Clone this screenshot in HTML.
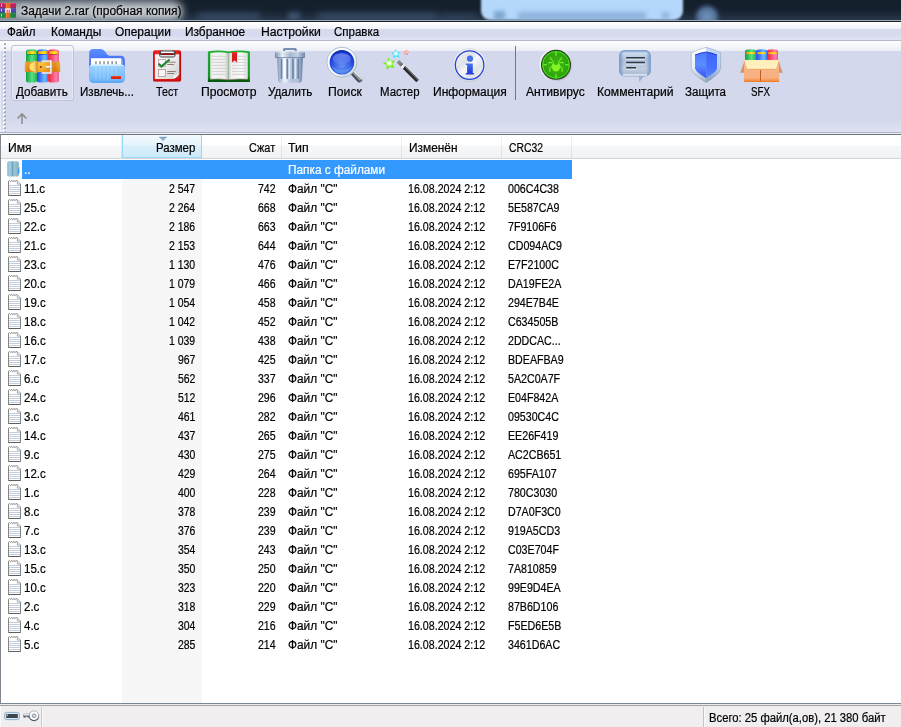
<!DOCTYPE html>
<html lang="ru">
<head>
<meta charset="utf-8">
<title>Задачи 2.rar (пробная копия)</title>
<style>
html,body{margin:0;padding:0;}
body{width:901px;height:727px;overflow:hidden;position:relative;background:#fff;
  font-family:"Liberation Sans","DejaVu Sans",sans-serif;font-size:12px;color:#000;}
.abs{position:absolute;}
.t{position:absolute;white-space:nowrap;line-height:14px;height:14px;transform-origin:0 50%;-webkit-text-stroke:.2px currentColor;}
.r{transform-origin:100% 50%;}
/* title bar */
#title{left:0;top:0;width:901px;height:22px;background:linear-gradient(#141f2c 0,#16212f 10px,#1d2a39 15px,#28384a 20px);overflow:hidden;}
#title .glow{left:-30px;top:0px;width:212px;height:22px;border-radius:11px;background:rgba(196,202,209,.86);filter:blur(5px);}
#title .blob1{left:481px;top:-10px;width:202px;height:30px;border-radius:9px;background:#b5d7fb;filter:blur(1.2px);}
#title .blob2{left:696px;top:6px;width:22px;height:22px;border-radius:11px;background:radial-gradient(#7898c0 0,#5a7aa2 45%,#46648c 100%);filter:blur(2px);}
#title .l1{left:0;top:20px;width:901px;height:1px;background:#9aa9b8;}
#title .l2{left:0;top:21px;width:901px;height:1px;background:#1b232c;}
.ttl{text-shadow:0 0 5px rgba(255,255,255,.9),0 0 9px rgba(255,255,255,.7);}
/* menu */
#menu{left:0;top:22px;width:901px;height:19px;background:linear-gradient(#ffffff 0,#ffffff 1px,#eef0f8 7px,#d9dcef 7px,#d5d9ed 12px,#e0e3f3 18px,#b4b8cc 18px,#b4b8cc 19px);}
/* toolbar */
#tb{left:0;top:41px;width:901px;height:91px;background:linear-gradient(#ffffff 0,#f6f7fb 5px,#eceef6 10px,#d4d8ec 10px,#d4d8ec 78px,#dde1f1 91px);}
#tbl1{left:0;top:132px;width:901px;height:1px;background:#b0b4c8;}
#tbl2{left:0;top:133px;width:901px;height:1px;background:#eeeeee;}
#tbl3{left:0;top:134px;width:901px;height:1px;background:#6c7480;}
.btnhot{left:11px;top:45px;width:61px;height:54px;border:1px solid #bfc3d5;border-radius:3px;background:linear-gradient(rgba(255,255,255,.35) 0,rgba(255,255,255,.22) 5px,rgba(255,255,255,.16) 6px,rgba(255,255,255,.12) 100%);box-shadow:inset 0 0 0 1px rgba(255,255,255,.35);}
.lbl{top:84px;}
/* list */
#list{left:0;top:135px;width:901px;height:568px;background:#fff;}
#lb{left:0;top:134px;width:1px;height:569px;background:#828790;}
#hdr{left:1px;top:135px;width:900px;height:23px;background:linear-gradient(#fff 0,#fff 10px,#f6f7f9 11px,#f1f2f4 23px);}
#hdrb{left:1px;top:158px;width:900px;height:1px;background:#d5d5d5;}
.hs{top:135px;width:1px;height:23px;background:linear-gradient(#f2f2f2,#dedfe1);}
#hsel{left:122px;top:135px;width:78px;height:22px;border:1px solid #96d9f9;border-top:none;background:linear-gradient(#f2f9fd 0,#e5f4fc 10px,#d9effb 11px,#cfeafa 22px);}
#sortcol{left:122px;top:159px;width:80px;height:544px;background:#f7f7f7;}
#selrow{left:22px;top:160px;width:550px;height:19px;background:#3399ff;}
.row{position:absolute;left:0;width:901px;height:19px;}
/* status */
#st{left:0;top:706px;width:901px;height:21px;background:#f0eeee;}
#stl1{left:0;top:703px;width:901px;height:1px;background:#7c8796;}
#stl2{left:0;top:704px;width:901px;height:2px;background:linear-gradient(#ececec 50%,#a4a4a4 50%);}
</style>
</head>
<body>
<!-- TITLE -->
<div id="title" class="abs">
  <div class="abs glow"></div>
  <div class="abs blob1"></div>
  <div class="abs blob2"></div>
  <div class="abs" style="left:494px;top:11px;width:11px;height:9px;background:#6f9ac4;filter:blur(2px);opacity:.8"></div>
  <div class="abs" style="left:518px;top:12px;width:128px;height:8px;background:#7fa6d2;filter:blur(2.5px);opacity:.75"></div>
  <div class="abs" style="left:662px;top:12px;width:7px;height:7px;background:#7fa6d2;filter:blur(2px);opacity:.7"></div>
  <div class="abs" style="left:318px;top:13px;width:120px;height:7px;background:#40587a;filter:blur(3px);opacity:.7"></div>
  <div class="abs" style="left:198px;top:13px;width:62px;height:7px;background:#40587a;filter:blur(3px);opacity:.7"></div>
  <div class="abs" style="left:288px;top:12px;width:12px;height:8px;background:#4a6488;filter:blur(2.5px);opacity:.7"></div>
  <div class="abs" style="left:440px;top:14px;width:36px;height:6px;background:#3a5070;filter:blur(3px);opacity:.6"></div>
  <div class="abs l1"></div><div class="abs l2"></div>
<div class="t ttl" style="left:21.10px;top:4.4px;transform:scaleX(0.9954)">Задачи 2.rar (пробная копия)</div>
</div>
<!-- MENU -->
<div id="menu" class="abs"></div>
<div class="t" style="left:7.10px;top:25.0px;transform:scaleX(0.9627)">Файл</div>
<div class="t" style="left:50.60px;top:25.0px;transform:scaleX(0.9897)">Команды</div>
<div class="t" style="left:115.40px;top:25.0px;transform:scaleX(0.9941)">Операции</div>
<div class="t" style="left:185.40px;top:25.0px;transform:scaleX(0.9895)">Избранное</div>
<div class="t" style="left:260.60px;top:25.0px;transform:scaleX(1.0166)">Настройки</div>
<div class="t" style="left:334.30px;top:25.0px;transform:scaleX(0.9599)">Справка</div>
<!-- TOOLBAR -->
<div id="tb" class="abs"></div>
<div id="tbl1" class="abs"></div><div id="tbl2" class="abs"></div><div id="tbl3" class="abs"></div>
<div class="abs btnhot"></div>
<svg class="abs" style="left:0;top:41px" width="901" height="92" viewBox="0 41 901 92">
<defs>
<linearGradient id="gGreen" x1="0" x2="1" y1="0" y2="0"><stop offset="0" stop-color="#12a040"/><stop offset=".55" stop-color="#58e084"/><stop offset="1" stop-color="#1fb54c"/></linearGradient>
<linearGradient id="gBlue" x1="0" x2="1" y1="0" y2="0"><stop offset="0" stop-color="#2844ee"/><stop offset=".7" stop-color="#6cbcff"/><stop offset="1" stop-color="#3c7cf4"/></linearGradient>
<linearGradient id="gRed" x1="0" x2="1" y1="0" y2="0"><stop offset="0" stop-color="#f02030"/><stop offset=".75" stop-color="#ff80b0"/><stop offset="1" stop-color="#f05080"/></linearGradient>
<linearGradient id="gYel" x1="0" x2="1" y1="0" y2="0"><stop offset="0" stop-color="#f09010"/><stop offset=".6" stop-color="#ffe820"/><stop offset="1" stop-color="#f8b010"/></linearGradient>
<linearGradient id="gBelt" x1="0" x2="0" y1="0" y2="1"><stop offset="0" stop-color="#fcc450"/><stop offset=".5" stop-color="#f4a024"/><stop offset="1" stop-color="#e07c10"/></linearGradient>
<linearGradient id="gBeltH" x1="0" x2="1" y1="0" y2="0"><stop offset="0" stop-color="#f0a030"/><stop offset=".1" stop-color="#d87818"/><stop offset=".3" stop-color="#f8c040"/><stop offset=".5" stop-color="#fcc838"/><stop offset=".62" stop-color="#f4a428"/><stop offset=".85" stop-color="#cc6c10"/><stop offset="1" stop-color="#f0a030"/></linearGradient>
<linearGradient id="gShade" x1="0" x2="0" y1="0" y2="1"><stop offset="0" stop-color="#fff" stop-opacity=".25"/><stop offset=".15" stop-color="#fff" stop-opacity="0"/><stop offset=".8" stop-color="#000" stop-opacity="0"/><stop offset="1" stop-color="#fff" stop-opacity=".2"/></linearGradient>
</defs>
<!-- ADD: books with belt -->
<g>
<path d="M26 51.2Q26 49.2 31.5 49.2Q37 49.2 37 51.2V81Q37 82.6 31.5 82.6Q26 82.6 26 81Z" fill="url(#gGreen)"/>
<path d="M37 51.2Q37 49.2 42.5 49.2Q48.1 49.2 48.1 51.2V81Q48.1 82.6 42.5 82.6Q37 82.6 37 81Z" fill="url(#gBlue)"/>
<path d="M48.1 51.2Q48.1 49.2 53.5 49.2Q58.9 49.2 58.9 51.2V81Q58.9 82.6 53.5 82.6Q48.1 82.6 48.1 81Z" fill="url(#gRed)"/>
<rect x="27" y="51.2" width="9" height="2.8" fill="url(#gYel)"/>
<rect x="38.1" y="51.2" width="9" height="2.8" fill="url(#gYel)"/>
<rect x="49" y="51.2" width="9" height="2.8" fill="url(#gYel)"/>
<rect x="27.5" y="54" width="8" height="1" fill="#0a7028" opacity=".5"/><rect x="38.5" y="54" width="8" height="1" fill="#1028a0" opacity=".5"/><rect x="49.5" y="54" width="8" height="1" fill="#a01020" opacity=".5"/>
<rect x="24.9" y="61.8" width="35.2" height="10.2" fill="url(#gBelt)"/>
<rect x="24.9" y="61.8" width="35.2" height="10.2" fill="url(#gBeltH)" opacity=".55"/>
<path d="M34 62.6A4.6 4.3 0 0 0 34 71.2Z" fill="#f8e468"/>
<rect x="33.9" y="61.2" width="3.7" height="11.5" fill="#f2b050"/><rect x="33.9" y="61.2" width="1.2" height="11.5" fill="#f8cc70"/><rect x="36.6" y="61.2" width="1" height="11.5" fill="#d08020"/>
<circle cx="40.8" cy="67" r="1" fill="#70380a"/>
<path d="M41.8 60.9H51V73.2H41.8" fill="none" stroke="#f2f4f8" stroke-width="1.8"/>
<path d="M41.8 60.2H51.8V73.9H41.8" fill="none" stroke="#8890a0" stroke-width=".5"/>
<rect x="45.7" y="66" width="5.6" height="1.9" fill="#fff"/><rect x="45.7" y="67.6" width="5.6" height=".6" fill="#9098a8"/>
</g>
<!-- EXTRACT: folder -->
<defs>
<linearGradient id="gFBack" x1="0" x2="0" y1="0" y2="1"><stop offset="0" stop-color="#5c90ff"/><stop offset=".4" stop-color="#4470f6"/><stop offset="1" stop-color="#3058e8"/></linearGradient>
<linearGradient id="gFFront" x1="0" x2="0" y1="0" y2="1"><stop offset="0" stop-color="#b8e4ff"/><stop offset=".12" stop-color="#98d0ff"/><stop offset=".75" stop-color="#78bcfa"/><stop offset="1" stop-color="#58a4f6"/></linearGradient>
</defs>
<g>
<path d="M89.2 53Q89.2 49 93.5 49H100.5Q102.8 49 104.3 50.8L107.2 54.6Q108 55.7 109.6 55.7H120.5Q124.8 55.7 124.8 60V78H89.2Z" fill="url(#gFBack)"/>
<rect x="90.9" y="58.2" width="30.4" height="8" fill="#fff"/>
<g fill="#8a9098"><rect x="95.2" y="61.2" width="1.5" height="3.2"/><rect x="99.2" y="61.2" width="1.5" height="3.2"/><rect x="103.3" y="61.2" width="1.5" height="3.2"/><rect x="107.3" y="61.2" width="1.5" height="3.2"/><rect x="111.4" y="61.2" width="1.5" height="3.2"/><rect x="115.4" y="61.2" width="1.5" height="3.2"/></g>
<rect x="121.6" y="59.5" width="1.2" height="5" fill="#a8c0f8" opacity=".8"/>
<path d="M89.1 68Q89.1 64.4 92.6 64.4H121.4Q124.9 64.4 124.9 68V78.6Q124.9 82.9 120.6 82.9H93.4Q89.1 82.9 89.1 78.6Z" fill="url(#gFFront)"/>
<path d="M90.2 66.3Q91 65.2 92.8 65.2H121.2Q123 65.2 123.8 66.3" fill="none" stroke="#e8f8ff" stroke-width=".9"/>
<g stroke="#fff" stroke-opacity=".18" stroke-width="1.4"><path d="M96 66V81M100 66V81M104 66V81M108 66V81M112 66V81M116 66V81"/></g>
<rect x="111" y="76.1" width="10" height="2.9" fill="#e62010"/><rect x="111" y="76.1" width="10" height=".8" fill="#f05030"/>
</g>
</svg>
<svg class="abs" style="left:0;top:41px" width="901" height="92" viewBox="0 41 901 92">
<defs>
<linearGradient id="gClipR" x1="0" x2="1" y1="0" y2="0"><stop offset="0" stop-color="#d01010"/><stop offset=".1" stop-color="#f02424"/><stop offset=".9" stop-color="#e81c1c"/><stop offset="1" stop-color="#b80808"/></linearGradient>
<linearGradient id="gPaper" x1="0" x2="1" y1="0" y2="1"><stop offset="0" stop-color="#fafafa"/><stop offset=".5" stop-color="#ececec"/><stop offset="1" stop-color="#cccccc"/></linearGradient>
<linearGradient id="gClipM" x1="0" x2="0" y1="0" y2="1"><stop offset="0" stop-color="#e8e8e8"/><stop offset=".3" stop-color="#505458"/><stop offset=".45" stop-color="#ffffff"/><stop offset=".7" stop-color="#d0d0d0"/><stop offset="1" stop-color="#585c60"/></linearGradient>
<linearGradient id="gCover" x1="0" x2="0" y1="0" y2="1"><stop offset="0" stop-color="#20b030"/><stop offset=".8" stop-color="#149820"/><stop offset="1" stop-color="#085c10"/></linearGradient>
<linearGradient id="gPgL" x1="0" x2="1" y1="0" y2="0"><stop offset="0" stop-color="#dcdcdc"/><stop offset=".15" stop-color="#f4f4f4"/><stop offset=".8" stop-color="#eeeeee"/><stop offset="1" stop-color="#bcbcbc"/></linearGradient>
<linearGradient id="gPgR" x1="0" x2="1" y1="0" y2="0"><stop offset="0" stop-color="#c8c8c8"/><stop offset=".15" stop-color="#f0f0f0"/><stop offset=".7" stop-color="#fafafa"/><stop offset="1" stop-color="#dadada"/></linearGradient>
<linearGradient id="gLid" x1="0" x2="1" y1="0" y2="0"><stop offset="0" stop-color="#7890b0"/><stop offset=".25" stop-color="#e8f0f8"/><stop offset=".5" stop-color="#a4b8d0"/><stop offset=".75" stop-color="#c0d0e4"/><stop offset="1" stop-color="#6c84a8"/></linearGradient>
<linearGradient id="gCan" x1="0" x2="1" y1="0" y2="0"><stop offset="0" stop-color="#7890b0"/><stop offset=".12" stop-color="#b4c4d8"/><stop offset=".3" stop-color="#eef4fa"/><stop offset=".5" stop-color="#b8c8dc"/><stop offset=".8" stop-color="#b0c0d6"/><stop offset="1" stop-color="#6880a4"/></linearGradient>
<radialGradient id="gLens" cx=".5" cy=".66" r=".66"><stop offset="0" stop-color="#6490f0"/><stop offset=".5" stop-color="#3860e8"/><stop offset=".8" stop-color="#1c3cd4"/><stop offset="1" stop-color="#0a24a8"/></radialGradient>
<linearGradient id="gLensHi" x1="0" x2="0" y1="0" y2="1"><stop offset="0" stop-color="#98a8fc"/><stop offset="1" stop-color="#7890f4" stop-opacity=".5"/></linearGradient>
<linearGradient id="gRing" x1="0" x2="1" y1="0" y2="1"><stop offset="0" stop-color="#ffffff"/><stop offset=".6" stop-color="#f4f8fa"/><stop offset="1" stop-color="#b8ccd4"/></linearGradient>
</defs>
<!-- TEST: clipboard -->
<g>
<rect x="153" y="50.3" width="28.1" height="31.2" rx="2.2" fill="url(#gClipR)"/>
<rect x="153" y="79.5" width="28.1" height="2" rx="1" fill="#b00808" opacity=".6"/>
<path d="M154.9 54.2H179.2V74.5Q178.5 78.6 172.5 79.1H154.9Z" fill="url(#gPaper)"/>
<path d="M179.2 74.2Q176 77 172.2 79.1Q178.6 79 179.2 74.2Z" fill="#a81414"/>
<path d="M179.2 73.5Q177 75.2 173.5 76Q173.8 77.8 172.5 79.1Q178 77.5 179.2 73.5Z" fill="#fafafa"/>
<rect x="163" y="49.2" width="9" height="2.4" rx=".8" fill="#dedede"/>
<rect x="159.2" y="50.5" width="16.4" height="6.9" rx="2.6" fill="#44484c"/>
<rect x="161" y="51.5" width="12.8" height="1.8" fill="#fafafa"/>
<rect x="161.6" y="53.3" width="11.6" height="1.7" fill="#8c1010"/>
<rect x="160.2" y="55" width="14.4" height="1.6" rx=".6" fill="#e6e6e6"/>
<rect x="158.4" y="59.6" width="7.2" height="7" fill="#f8f4f4" stroke="#b09c9c" stroke-width=".7"/>
<rect x="158.4" y="69.5" width="7.2" height="7" fill="#f8f4f4" stroke="#a08c8c" stroke-width=".7"/>
<path d="M158.6 63.6L161.3 66.5L169.6 59.5" fill="none" stroke="#168428" stroke-width="2" stroke-linejoin="miter"/>
<g stroke="#8a6c6c" stroke-width=".9"><path d="M167.2 62.2H175.6M167.2 64.5H174M167.2 71.5H175.6M167.2 73.5H174"/></g>
</g>
<!-- VIEW: open book -->
<g>
<path d="M207.9 51.5Q218 49.6 229 51.6Q240 49.6 249.9 51.5V81.9H207.9Z" fill="url(#gCover)"/>
<path d="M207.9 79.8H249.9V81.9H207.9Z" fill="#06500c" opacity=".55"/>
<path d="M210.2 53Q220 51.6 228.6 53.2V79.8Q220 78.4 210.2 79.2Z" fill="url(#gPgL)"/>
<path d="M228.6 53.2Q238 51.6 247.8 53V79.2Q238 78.4 228.6 79.8Z" fill="url(#gPgR)"/>
<path d="M210.2 79.2Q220 78.4 228.6 79.8Q238 78.4 247.8 79.2" fill="none" stroke="#a07878" stroke-width=".6"/>
<g stroke="#cecece" stroke-width=".9"><path d="M212 56.3H226M212 59.4H226M212 62.4H226M212 65.4H226M212 68.4H226M212 71.4H226M212 74.4H226"/><path d="M238 56.3H246M238 59.4H246M232 62.4H246M232 65.4H246M232 68.4H246M232 71.4H246M232 74.4H246"/></g>
<path d="M231.9 52.2H237.1V62.4L234.5 60.4L231.9 62.4Z" fill="#d62020"/><path d="M231.9 52.2H237.1V53.6H231.9Z" fill="#f03030"/>
</g>
<!-- DELETE: trash can -->
<g>
<path d="M283 51.4V49.4Q283 47.9 284.5 47.9H295.3Q296.8 47.9 296.8 49.4V51.4H294.6V50H285.2V51.4Z" fill="#7890b0"/>
<path d="M277.1 57H303L301.9 80.4Q301.8 82.7 299.4 82.7H280.7Q278.3 82.7 278.2 80.4Z" fill="url(#gCan)"/>
<g fill="#6c84a8"><rect x="280.6" y="58.6" width="1.7" height="20.4" rx=".8"/><rect x="286.4" y="58.6" width="1.7" height="20.4" rx=".8"/><rect x="292.1" y="58.6" width="1.7" height="20.4" rx=".8"/><rect x="297.4" y="58.6" width="1.7" height="20.4" rx=".8"/></g>
<g fill="#fff" opacity=".85"><rect x="283.4" y="58.6" width="2.3" height="20.4"/><rect x="289" y="58.6" width="1.2" height="20.4" opacity=".6"/><rect x="294.6" y="58.6" width="1.5" height="20.4" opacity=".7"/></g>
<path d="M274.9 54Q274.9 51.2 278 51.2H302Q305 51.2 305 54V56.4Q305 57.9 303.5 57.9H276.4Q274.9 57.9 274.9 56.4Z" fill="url(#gLid)"/>
<path d="M276 52.6Q276.5 51.8 278 51.8H302Q303.5 51.8 304 52.6" fill="none" stroke="#eef4fa" stroke-width=".8"/>
<rect x="275.4" y="57.1" width="29.2" height=".9" fill="#5c7498" opacity=".7"/>
</g>
<!-- FIND: magnifier -->
<g>
<path d="M350.6 74.2L354.6 70.4L362.4 78.2Q363.2 79.8 361.4 81.6Q359.6 83.2 358 82.2Z" fill="#4a4e58"/>
<path d="M354.6 70.4L362.4 78.2Q362.9 79.2 362.3 80.2L353.2 71.7Z" fill="#f0f2f4"/>
<path d="M353.4 73L360.6 80.4" stroke="#9aa0aa" stroke-width="1.6"/>
<circle cx="341.9" cy="62.2" r="15.3" fill="url(#gRing)"/>
<circle cx="341.9" cy="62.2" r="15" fill="none" stroke="#98b0ba" stroke-width=".8"/>
<circle cx="341.9" cy="62.2" r="12.3" fill="url(#gLens)"/>
<ellipse cx="341.7" cy="58.6" rx="9" ry="5.4" fill="url(#gLensHi)" opacity=".6"/>
<path d="M331.5 66Q342 74 352.3 66Q349 73.6 341.9 73.8Q334.8 73.6 331.5 66Z" fill="#68a8f4" opacity=".55"/>
</g>
</svg>
<svg class="abs" style="left:0;top:41px" width="901" height="92" viewBox="0 41 901 92">
<defs>
<radialGradient id="gStarG"><stop offset="0" stop-color="#ffffff"/><stop offset=".3" stop-color="#e8ffd8"/><stop offset=".6" stop-color="#78f418"/><stop offset="1" stop-color="#58ec00"/></radialGradient>
<radialGradient id="gStarC"><stop offset="0" stop-color="#ffffff"/><stop offset=".3" stop-color="#e0fcff"/><stop offset=".65" stop-color="#28ecff"/><stop offset="1" stop-color="#00e0ff"/></radialGradient>
<radialGradient id="gStarP"><stop offset="0" stop-color="#ffd8d8"/><stop offset=".5" stop-color="#ff9c9c"/><stop offset="1" stop-color="#ff7878"/></radialGradient>
<linearGradient id="gWand" gradientUnits="userSpaceOnUse" x1="397.9" y1="61.3" x2="417.6" y2="81"><stop offset="0" stop-color="#909090"/><stop offset=".2" stop-color="#707070"/><stop offset=".22" stop-color="#f8f8f8"/><stop offset=".3" stop-color="#f0f0f0"/><stop offset=".32" stop-color="#282828"/><stop offset="1" stop-color="#303030"/></linearGradient>
<radialGradient id="gInfoRim" cx=".5" cy=".4" r=".6"><stop offset="0" stop-color="#ffffff"/><stop offset=".8" stop-color="#eef0f4"/><stop offset="1" stop-color="#c8d0d8"/></radialGradient>
<linearGradient id="gInfoIn" x1="0" x2="1" y1="0" y2="1"><stop offset="0" stop-color="#f4f5f8"/><stop offset=".35" stop-color="#dfe2e8"/><stop offset=".5" stop-color="#f6f7fa"/><stop offset=".7" stop-color="#e0e3ea"/><stop offset="1" stop-color="#f0f2f6"/></linearGradient>
<linearGradient id="gInfoI" x1="0" x2="0" y1="0" y2="1"><stop offset="0" stop-color="#4878ec"/><stop offset=".4" stop-color="#3458e4"/><stop offset="1" stop-color="#2438dc"/></linearGradient>
<linearGradient id="gAvRim" x1="0" x2="1" y1="0" y2="1"><stop offset="0" stop-color="#ffffff"/><stop offset=".5" stop-color="#e4e6ea"/><stop offset="1" stop-color="#a8acb4"/></linearGradient>
<radialGradient id="gAv" cx=".5" cy=".5" r=".5"><stop offset="0" stop-color="#48c018"/><stop offset=".7" stop-color="#38ac10"/><stop offset="1" stop-color="#2c9808"/></radialGradient>
</defs>
<!-- WIZARD -->
<g>
<path id="star5" d="M0 -1L0.2939 -0.4045L0.9511 -0.309L0.4755 0.1545L0.5878 0.809L0 0.5L-0.5878 0.809L-0.4755 0.1545L-0.9511 -0.309L-0.2939 -0.4045Z" transform="translate(389.4 63.8) rotate(-12) scale(6.4)" fill="url(#gStarG)"/>
<path d="M0 -1L0.2939 -0.4045L0.9511 -0.309L0.4755 0.1545L0.5878 0.809L0 0.5L-0.5878 0.809L-0.4755 0.1545L-0.9511 -0.309L-0.2939 -0.4045Z" transform="translate(396 54) rotate(-5) scale(4.7)" fill="url(#gStarC)"/>
<path d="M0 -1L0.2939 -0.4045L0.9511 -0.309L0.4755 0.1545L0.5878 0.809L0 0.5L-0.5878 0.809L-0.4755 0.1545L-0.9511 -0.309L-0.2939 -0.4045Z" transform="translate(406.4 52.6) rotate(5) scale(3.2)" fill="url(#gStarP)"/>
<path d="M397.9 61.3L417.6 81" stroke="url(#gWand)" stroke-width="3.6"/>
<path d="M403.6 65.6L418 80" stroke="#8c8c8c" stroke-width=".9" opacity=".8"/>
</g>
<!-- INFO -->
<g>
<circle cx="469.6" cy="65.1" r="16.7" fill="url(#gInfoRim)"/>
<circle cx="469.6" cy="65.1" r="16.5" fill="none" stroke="#c0c8d2" stroke-width=".5"/>
<circle cx="469.6" cy="65.1" r="14.1" fill="url(#gInfoIn)"/>
<circle cx="469.6" cy="65.1" r="14.3" fill="none" stroke="#2844d4" stroke-width="1.3"/>
<circle cx="470" cy="58.7" r="3.1" fill="#4474ea"/>
<path d="M465.8 63.4H472.8V72.9H473.9V74.6H465.8V72.9H467.1V65.1H465.8Z" fill="url(#gInfoI)"/>
</g>
<!-- separator -->
<rect x="515" y="46" width="1" height="54" fill="#74767e"/>
<!-- ANTIVIRUS -->
<g>
<circle cx="556" cy="64.8" r="16.5" fill="url(#gAvRim)"/>
<circle cx="556" cy="64.8" r="15" fill="#2a3428"/>
<circle cx="556" cy="64.8" r="14.1" fill="url(#gAv)"/>
<g stroke="#2c9c0c" stroke-width=".8" opacity=".7"><path d="M543 58H569M542.3 60H569.7M542 62H570M542 64H570M542 66H570M542 68H570M542.3 70H569.7M543 72H569M544.5 74H567.5M546 56H566M546.5 76H565.5"/></g>
<circle cx="556" cy="64.8" r="13.2" fill="none" stroke="#48e420" stroke-width="1"/>
<g stroke="#58f028" stroke-width="1.6"><path d="M556 52V55.5M556 74.2V77.6M543.2 64.8H546.7M565.3 64.8H568.8"/></g>
<g stroke="#70f020" stroke-width="1.1" fill="none"><path d="M553.5 62L550 57.4M558.5 62L562 57.4M552.5 62.6H548.2M559.5 62.6H563.8M552.4 66L549.8 68.4V72M559.6 66L562.2 68.4V72"/></g>
<ellipse cx="556" cy="66.6" rx="4.1" ry="5" fill="#84f424"/>
<circle cx="555.9" cy="62.9" r="2.1" fill="#34b410"/>
</g>
</svg>
<svg class="abs" style="left:0;top:41px" width="901" height="92" viewBox="0 41 901 92">
<defs>
<linearGradient id="gBub" x1="0" x2="0" y1="0" y2="1"><stop offset="0" stop-color="#88a4d4"/><stop offset=".12" stop-color="#ccdaee"/><stop offset=".35" stop-color="#b0c2dc"/><stop offset=".7" stop-color="#c0cce0"/><stop offset="1" stop-color="#a8b8d0"/></linearGradient>
<linearGradient id="gBubE" x1="0" x2="1" y1="0" y2="0"><stop offset="0" stop-color="#6c8cc0" stop-opacity=".8"/><stop offset=".15" stop-color="#6c8cc0" stop-opacity="0"/><stop offset=".85" stop-color="#6c8cc0" stop-opacity="0"/><stop offset="1" stop-color="#6c8cc0" stop-opacity=".8"/></linearGradient>
<linearGradient id="gShL" x1="0" x2="0" y1="0" y2="1"><stop offset="0" stop-color="#4a7cff"/><stop offset=".5" stop-color="#5c8cff"/><stop offset="1" stop-color="#3850f8"/></linearGradient>
<linearGradient id="gShR" x1="0" x2="0" y1="0" y2="1"><stop offset="0" stop-color="#3c64fc"/><stop offset=".6" stop-color="#4870ff"/><stop offset="1" stop-color="#5888fc"/></linearGradient>
<linearGradient id="gShRimL" x1="0" x2="0" y1="0" y2="1"><stop offset="0" stop-color="#ffffff"/><stop offset=".6" stop-color="#e8eef6"/><stop offset="1" stop-color="#98acc4"/></linearGradient>
<linearGradient id="gShRimR" x1="0" x2="0" y1="0" y2="1"><stop offset="0" stop-color="#c4dcf8"/><stop offset=".6" stop-color="#b8cce8"/><stop offset="1" stop-color="#8098b8"/></linearGradient>
<linearGradient id="gBoxF" x1="0" x2="0" y1="0" y2="1"><stop offset="0" stop-color="#c88450"/><stop offset=".25" stop-color="#f4b488"/><stop offset=".8" stop-color="#f8b080"/><stop offset="1" stop-color="#f48838"/></linearGradient>
<linearGradient id="gBoxI" x1="0" x2="0" y1="0" y2="1"><stop offset="0" stop-color="#ffeeb4"/><stop offset="1" stop-color="#fff2c4"/></linearGradient>
</defs>
<!-- COMMENT -->
<g>
<path d="M638.9 75.5H644.6L639.2 82.2Z" fill="#9cb4d0"/>
<rect x="619.2" y="50.1" width="31.5" height="26.3" rx="5.4" fill="url(#gBub)"/>
<rect x="619.2" y="50.1" width="31.5" height="26.3" rx="5.4" fill="url(#gBubE)"/>
<rect x="620" y="50.8" width="29.9" height="24.9" rx="4.8" fill="none" stroke="#7c9ccc" stroke-width=".9"/>
<path d="M623 75H647" stroke="#f0f6fc" stroke-width="1.3"/>
<g stroke="#e0e8f2" stroke-width="1.3"><path d="M626.2 59H644.9M626.2 63.9H644.9M626.2 69H636"/></g>
<g stroke="#2c3640" stroke-width="1.5"><path d="M626.2 57.7H644.9M626.2 62.6H644.9M626.2 67.7H636"/></g>
</g>
<!-- PROTECT: shield -->
<g>
<path d="M706.1 47.2Q698 49 691.1 52.7V68.8Q692.5 74.5 706.1 82.7Z" fill="url(#gShRimL)"/>
<path d="M706.1 47.2Q714.2 49 720.8 52.7V68.8Q719.6 74.5 706.1 82.7Z" fill="url(#gShRimR)"/>
<path d="M706.1 47.4Q698 49.2 691.3 52.9V68.7Q692.7 74.4 706.1 82.5Q719.4 74.4 720.6 68.7V52.9Q714.2 49.2 706.1 47.4Z" fill="none" stroke="#8c9cb4" stroke-width=".5"/>
<path d="M706.1 52.1Q700 52.8 695 55V68.6Q696.4 72.6 706.1 78.2Z" fill="url(#gShL)"/>
<path d="M706.1 52.1Q712 52.8 717 55V68.6Q715.8 72.6 706.1 78.2Z" fill="url(#gShR)"/>
<path d="M695 55Q700 52.8 706.1 52.1Q712 52.8 717 55" fill="none" stroke="#1c34c8" stroke-width=".9"/>
</g>
<!-- SFX -->
<g>
<path d="M744.2 62L740.2 72.7H744.2Z" fill="#d49468"/><path d="M779 62L782.7 72.7H779Z" fill="#d49468"/>
<path d="M745 51Q745 49.2 750.5 49.2Q756.1 49.2 756.1 51V61H745Z" fill="url(#gGreen2)"/>
<path d="M756.1 51Q756.1 49.2 761.5 49.2Q767 49.2 767 51V61H756.1Z" fill="url(#gBlue2)"/>
<path d="M767 51Q767 49.2 772.5 49.2Q778 49.2 778 51V61H767Z" fill="url(#gRed2)"/>
<rect x="746.2" y="52.1" width="8.8" height="2" fill="url(#gYel2)"/><rect x="757.2" y="52.1" width="8.8" height="2" fill="url(#gYel2)"/><rect x="768.2" y="52.1" width="8.8" height="2" fill="url(#gYel2)"/>
<rect x="744" y="60" width="35.1" height="21.9" fill="url(#gBoxF)"/>
<path d="M744 60H779.1L775.9 69.3H747.2Z" fill="url(#gBoxI)"/>
<path d="M747.2 69.3H775.9" stroke="#f0a050" stroke-width=".8"/>
<rect x="760" y="70" width="1" height="11.9" fill="#c0601c"/>
<rect x="744" y="80.9" width="35.1" height="1" fill="#f08028"/>
</g>
<defs>
<linearGradient id="gGreen2" x1="0" x2="1" y1="0" y2="0"><stop offset="0" stop-color="#12a040"/><stop offset=".6" stop-color="#58e084"/><stop offset="1" stop-color="#1fb54c"/></linearGradient>
<linearGradient id="gBlue2" x1="0" x2="1" y1="0" y2="0"><stop offset="0" stop-color="#2844ee"/><stop offset=".7" stop-color="#6cbcff"/><stop offset="1" stop-color="#3c7cf4"/></linearGradient>
<linearGradient id="gRed2" x1="0" x2="1" y1="0" y2="0"><stop offset="0" stop-color="#f02030"/><stop offset=".75" stop-color="#ff80b0"/><stop offset="1" stop-color="#f05080"/></linearGradient>
<linearGradient id="gYel2" x1="0" x2="1" y1="0" y2="0"><stop offset="0" stop-color="#f09010"/><stop offset=".6" stop-color="#ffe820"/><stop offset="1" stop-color="#f8b010"/></linearGradient>
</defs>
</svg>

<div class="t" style="left:16.00px;top:84.6px;transform:scaleX(0.9776)">Добавить</div>
<div class="t" style="left:79.60px;top:84.6px;transform:scaleX(0.9645)">Извлечь...</div>
<div class="t" style="left:156.40px;top:84.6px;transform:scaleX(0.8922)">Тест</div>
<div class="t" style="left:200.70px;top:84.6px;transform:scaleX(1.0140)">Просмотр</div>
<div class="t" style="left:268.00px;top:84.6px;transform:scaleX(0.9657)">Удалить</div>
<div class="t" style="left:327.60px;top:84.6px;transform:scaleX(1.0176)">Поиск</div>
<div class="t" style="left:379.60px;top:84.6px;transform:scaleX(0.9512)">Мастер</div>
<div class="t" style="left:433.40px;top:84.6px;transform:scaleX(1.0045)">Информация</div>
<div class="t" style="left:526.40px;top:84.6px;transform:scaleX(1.0066)">Антивирус</div>
<div class="t" style="left:596.50px;top:84.6px;transform:scaleX(1.0123)">Комментарий</div>
<div class="t" style="left:685.10px;top:84.6px;transform:scaleX(0.9636)">Защита</div>
<div class="t" style="left:751.00px;top:84.6px;transform:scaleX(0.8143)">SFX</div>
<!-- LIST -->
<div id="list" class="abs"></div>
<div id="lb" class="abs"></div>
<div id="hdr" class="abs"></div><div id="hdrb" class="abs"></div>
<div id="sortcol" class="abs"></div>
<div id="hsel" class="abs"></div>
<div id="selrow" class="abs"></div>
<div class="abs hs" style="left:121px"></div><div class="abs hs" style="left:281px"></div><div class="abs hs" style="left:401px"></div><div class="abs hs" style="left:501px"></div><div class="abs hs" style="left:571px"></div>
<div class="t" style="left:8.40px;top:141.0px;transform:scaleX(1.0098)">Имя</div>
<div class="t" style="left:156.40px;top:141.0px;transform:scaleX(0.9526)">Размер</div>
<div class="t" style="left:248.50px;top:141.0px;transform:scaleX(0.9058)">Сжат</div>
<div class="t" style="left:288.40px;top:141.0px;transform:scaleX(1.0305)">Тип</div>
<div class="t" style="left:408.60px;top:141.0px;transform:scaleX(0.9907)">Изменён</div>
<div class="t" style="left:508.60px;top:141.0px;transform:scaleX(0.8621)">CRC32</div>
<div class="t" style="left:23.83px;top:163.0px;transform:scaleX(0.9749);color:#fff">..</div>
<div class="t" style="left:288.40px;top:163.0px;transform:scaleX(0.9854);color:#fff">Папка с файлами</div>
<svg class="abs" style="left:8px;top:180px" width="13" height="16" viewBox="0 0 13 16"><path d="M0.5 1.2L1.6 0.5L2.7 1.5L3.8 0.5L4.9 1.5L6 0.5L7.1 1.5L8.2 0.5L9.3 0.9L12.5 4.1V15.5H0.5Z" fill="#fff" stroke="#848484" stroke-width="1" stroke-linejoin="round"/><path d="M9.3 0.9V4.1H12.5" fill="#f0f0f0" stroke="#9a9a9a" stroke-width=".8"/><path d="M1 5.5H12M1 7.5H12M1 9.5H12M1 11.5H12M1 13.5H12" stroke="#c0cede" stroke-width="1"/><path d="M0.5 15.5H12.5" stroke="#606060" stroke-width="1"/></svg>
<div class="t" style="left:23.60px;top:182.0px;transform:scaleX(0.9591)">11.c</div>
<div class="t" style="left:169.00px;top:182.0px;transform:scaleX(0.8697)">2 547</div>
<div class="t" style="left:258.00px;top:182.0px;transform:scaleX(0.8797)">742</div>
<div class="t" style="left:288.10px;top:182.0px;transform:scaleX(0.9887)">Файл "C"</div>
<div class="t" style="left:408.00px;top:182.0px;transform:scaleX(0.8889)">16.08.2024 2:12</div>
<div class="t" style="left:508.00px;top:182.0px;transform:scaleX(0.8873)">006C4C38</div>
<svg class="abs" style="left:8px;top:199px" width="13" height="16" viewBox="0 0 13 16"><path d="M0.5 1.2L1.6 0.5L2.7 1.5L3.8 0.5L4.9 1.5L6 0.5L7.1 1.5L8.2 0.5L9.3 0.9L12.5 4.1V15.5H0.5Z" fill="#fff" stroke="#848484" stroke-width="1" stroke-linejoin="round"/><path d="M9.3 0.9V4.1H12.5" fill="#f0f0f0" stroke="#9a9a9a" stroke-width=".8"/><path d="M1 5.5H12M1 7.5H12M1 9.5H12M1 11.5H12M1 13.5H12" stroke="#c0cede" stroke-width="1"/><path d="M0.5 15.5H12.5" stroke="#606060" stroke-width="1"/></svg>
<div class="t" style="left:23.60px;top:201.0px;transform:scaleX(0.9591)">25.c</div>
<div class="t" style="left:169.00px;top:201.0px;transform:scaleX(0.8697)">2 264</div>
<div class="t" style="left:258.00px;top:201.0px;transform:scaleX(0.8797)">668</div>
<div class="t" style="left:288.10px;top:201.0px;transform:scaleX(0.9887)">Файл "C"</div>
<div class="t" style="left:408.00px;top:201.0px;transform:scaleX(0.8889)">16.08.2024 2:12</div>
<div class="t" style="left:508.00px;top:201.0px;transform:scaleX(0.8873)">5E587CA9</div>
<svg class="abs" style="left:8px;top:218px" width="13" height="16" viewBox="0 0 13 16"><path d="M0.5 1.2L1.6 0.5L2.7 1.5L3.8 0.5L4.9 1.5L6 0.5L7.1 1.5L8.2 0.5L9.3 0.9L12.5 4.1V15.5H0.5Z" fill="#fff" stroke="#848484" stroke-width="1" stroke-linejoin="round"/><path d="M9.3 0.9V4.1H12.5" fill="#f0f0f0" stroke="#9a9a9a" stroke-width=".8"/><path d="M1 5.5H12M1 7.5H12M1 9.5H12M1 11.5H12M1 13.5H12" stroke="#c0cede" stroke-width="1"/><path d="M0.5 15.5H12.5" stroke="#606060" stroke-width="1"/></svg>
<div class="t" style="left:23.60px;top:220.0px;transform:scaleX(0.9591)">22.c</div>
<div class="t" style="left:169.00px;top:220.0px;transform:scaleX(0.8697)">2 186</div>
<div class="t" style="left:258.00px;top:220.0px;transform:scaleX(0.8797)">663</div>
<div class="t" style="left:288.10px;top:220.0px;transform:scaleX(0.9887)">Файл "C"</div>
<div class="t" style="left:408.00px;top:220.0px;transform:scaleX(0.8889)">16.08.2024 2:12</div>
<div class="t" style="left:508.00px;top:220.0px;transform:scaleX(0.8873)">7F9106F6</div>
<svg class="abs" style="left:8px;top:237px" width="13" height="16" viewBox="0 0 13 16"><path d="M0.5 1.2L1.6 0.5L2.7 1.5L3.8 0.5L4.9 1.5L6 0.5L7.1 1.5L8.2 0.5L9.3 0.9L12.5 4.1V15.5H0.5Z" fill="#fff" stroke="#848484" stroke-width="1" stroke-linejoin="round"/><path d="M9.3 0.9V4.1H12.5" fill="#f0f0f0" stroke="#9a9a9a" stroke-width=".8"/><path d="M1 5.5H12M1 7.5H12M1 9.5H12M1 11.5H12M1 13.5H12" stroke="#c0cede" stroke-width="1"/><path d="M0.5 15.5H12.5" stroke="#606060" stroke-width="1"/></svg>
<div class="t" style="left:23.60px;top:239.0px;transform:scaleX(0.9591)">21.c</div>
<div class="t" style="left:169.00px;top:239.0px;transform:scaleX(0.8697)">2 153</div>
<div class="t" style="left:258.00px;top:239.0px;transform:scaleX(0.8797)">644</div>
<div class="t" style="left:288.10px;top:239.0px;transform:scaleX(0.9887)">Файл "C"</div>
<div class="t" style="left:408.00px;top:239.0px;transform:scaleX(0.8889)">16.08.2024 2:12</div>
<div class="t" style="left:508.00px;top:239.0px;transform:scaleX(0.8873)">CD094AC9</div>
<svg class="abs" style="left:8px;top:256px" width="13" height="16" viewBox="0 0 13 16"><path d="M0.5 1.2L1.6 0.5L2.7 1.5L3.8 0.5L4.9 1.5L6 0.5L7.1 1.5L8.2 0.5L9.3 0.9L12.5 4.1V15.5H0.5Z" fill="#fff" stroke="#848484" stroke-width="1" stroke-linejoin="round"/><path d="M9.3 0.9V4.1H12.5" fill="#f0f0f0" stroke="#9a9a9a" stroke-width=".8"/><path d="M1 5.5H12M1 7.5H12M1 9.5H12M1 11.5H12M1 13.5H12" stroke="#c0cede" stroke-width="1"/><path d="M0.5 15.5H12.5" stroke="#606060" stroke-width="1"/></svg>
<div class="t" style="left:23.60px;top:258.0px;transform:scaleX(0.9591)">23.c</div>
<div class="t" style="left:169.00px;top:258.0px;transform:scaleX(0.8697)">1 130</div>
<div class="t" style="left:258.00px;top:258.0px;transform:scaleX(0.8797)">476</div>
<div class="t" style="left:288.10px;top:258.0px;transform:scaleX(0.9887)">Файл "C"</div>
<div class="t" style="left:408.00px;top:258.0px;transform:scaleX(0.8889)">16.08.2024 2:12</div>
<div class="t" style="left:508.00px;top:258.0px;transform:scaleX(0.8873)">E7F2100C</div>
<svg class="abs" style="left:8px;top:275px" width="13" height="16" viewBox="0 0 13 16"><path d="M0.5 1.2L1.6 0.5L2.7 1.5L3.8 0.5L4.9 1.5L6 0.5L7.1 1.5L8.2 0.5L9.3 0.9L12.5 4.1V15.5H0.5Z" fill="#fff" stroke="#848484" stroke-width="1" stroke-linejoin="round"/><path d="M9.3 0.9V4.1H12.5" fill="#f0f0f0" stroke="#9a9a9a" stroke-width=".8"/><path d="M1 5.5H12M1 7.5H12M1 9.5H12M1 11.5H12M1 13.5H12" stroke="#c0cede" stroke-width="1"/><path d="M0.5 15.5H12.5" stroke="#606060" stroke-width="1"/></svg>
<div class="t" style="left:23.60px;top:277.0px;transform:scaleX(0.9591)">20.c</div>
<div class="t" style="left:169.00px;top:277.0px;transform:scaleX(0.8697)">1 079</div>
<div class="t" style="left:258.00px;top:277.0px;transform:scaleX(0.8797)">466</div>
<div class="t" style="left:288.10px;top:277.0px;transform:scaleX(0.9887)">Файл "C"</div>
<div class="t" style="left:408.00px;top:277.0px;transform:scaleX(0.8889)">16.08.2024 2:12</div>
<div class="t" style="left:508.00px;top:277.0px;transform:scaleX(0.8873)">DA19FE2A</div>
<svg class="abs" style="left:8px;top:294px" width="13" height="16" viewBox="0 0 13 16"><path d="M0.5 1.2L1.6 0.5L2.7 1.5L3.8 0.5L4.9 1.5L6 0.5L7.1 1.5L8.2 0.5L9.3 0.9L12.5 4.1V15.5H0.5Z" fill="#fff" stroke="#848484" stroke-width="1" stroke-linejoin="round"/><path d="M9.3 0.9V4.1H12.5" fill="#f0f0f0" stroke="#9a9a9a" stroke-width=".8"/><path d="M1 5.5H12M1 7.5H12M1 9.5H12M1 11.5H12M1 13.5H12" stroke="#c0cede" stroke-width="1"/><path d="M0.5 15.5H12.5" stroke="#606060" stroke-width="1"/></svg>
<div class="t" style="left:23.60px;top:296.0px;transform:scaleX(0.9591)">19.c</div>
<div class="t" style="left:169.00px;top:296.0px;transform:scaleX(0.8697)">1 054</div>
<div class="t" style="left:258.00px;top:296.0px;transform:scaleX(0.8797)">458</div>
<div class="t" style="left:288.10px;top:296.0px;transform:scaleX(0.9887)">Файл "C"</div>
<div class="t" style="left:408.00px;top:296.0px;transform:scaleX(0.8889)">16.08.2024 2:12</div>
<div class="t" style="left:508.00px;top:296.0px;transform:scaleX(0.8873)">294E7B4E</div>
<svg class="abs" style="left:8px;top:313px" width="13" height="16" viewBox="0 0 13 16"><path d="M0.5 1.2L1.6 0.5L2.7 1.5L3.8 0.5L4.9 1.5L6 0.5L7.1 1.5L8.2 0.5L9.3 0.9L12.5 4.1V15.5H0.5Z" fill="#fff" stroke="#848484" stroke-width="1" stroke-linejoin="round"/><path d="M9.3 0.9V4.1H12.5" fill="#f0f0f0" stroke="#9a9a9a" stroke-width=".8"/><path d="M1 5.5H12M1 7.5H12M1 9.5H12M1 11.5H12M1 13.5H12" stroke="#c0cede" stroke-width="1"/><path d="M0.5 15.5H12.5" stroke="#606060" stroke-width="1"/></svg>
<div class="t" style="left:23.60px;top:315.0px;transform:scaleX(0.9591)">18.c</div>
<div class="t" style="left:169.00px;top:315.0px;transform:scaleX(0.8697)">1 042</div>
<div class="t" style="left:258.00px;top:315.0px;transform:scaleX(0.8797)">452</div>
<div class="t" style="left:288.10px;top:315.0px;transform:scaleX(0.9887)">Файл "C"</div>
<div class="t" style="left:408.00px;top:315.0px;transform:scaleX(0.8889)">16.08.2024 2:12</div>
<div class="t" style="left:508.00px;top:315.0px;transform:scaleX(0.8873)">C634505B</div>
<svg class="abs" style="left:8px;top:332px" width="13" height="16" viewBox="0 0 13 16"><path d="M0.5 1.2L1.6 0.5L2.7 1.5L3.8 0.5L4.9 1.5L6 0.5L7.1 1.5L8.2 0.5L9.3 0.9L12.5 4.1V15.5H0.5Z" fill="#fff" stroke="#848484" stroke-width="1" stroke-linejoin="round"/><path d="M9.3 0.9V4.1H12.5" fill="#f0f0f0" stroke="#9a9a9a" stroke-width=".8"/><path d="M1 5.5H12M1 7.5H12M1 9.5H12M1 11.5H12M1 13.5H12" stroke="#c0cede" stroke-width="1"/><path d="M0.5 15.5H12.5" stroke="#606060" stroke-width="1"/></svg>
<div class="t" style="left:23.60px;top:334.0px;transform:scaleX(0.9591)">16.c</div>
<div class="t" style="left:169.00px;top:334.0px;transform:scaleX(0.8697)">1 039</div>
<div class="t" style="left:258.00px;top:334.0px;transform:scaleX(0.8797)">438</div>
<div class="t" style="left:288.10px;top:334.0px;transform:scaleX(0.9887)">Файл "C"</div>
<div class="t" style="left:408.00px;top:334.0px;transform:scaleX(0.8889)">16.08.2024 2:12</div>
<div class="t" style="left:508.00px;top:334.0px;transform:scaleX(0.8873)">2DDCAC...</div>
<svg class="abs" style="left:8px;top:351px" width="13" height="16" viewBox="0 0 13 16"><path d="M0.5 1.2L1.6 0.5L2.7 1.5L3.8 0.5L4.9 1.5L6 0.5L7.1 1.5L8.2 0.5L9.3 0.9L12.5 4.1V15.5H0.5Z" fill="#fff" stroke="#848484" stroke-width="1" stroke-linejoin="round"/><path d="M9.3 0.9V4.1H12.5" fill="#f0f0f0" stroke="#9a9a9a" stroke-width=".8"/><path d="M1 5.5H12M1 7.5H12M1 9.5H12M1 11.5H12M1 13.5H12" stroke="#c0cede" stroke-width="1"/><path d="M0.5 15.5H12.5" stroke="#606060" stroke-width="1"/></svg>
<div class="t" style="left:23.60px;top:353.0px;transform:scaleX(0.9591)">17.c</div>
<div class="t" style="left:177.70px;top:353.0px;transform:scaleX(0.8697)">967</div>
<div class="t" style="left:258.00px;top:353.0px;transform:scaleX(0.8797)">425</div>
<div class="t" style="left:288.10px;top:353.0px;transform:scaleX(0.9887)">Файл "C"</div>
<div class="t" style="left:408.00px;top:353.0px;transform:scaleX(0.8889)">16.08.2024 2:12</div>
<div class="t" style="left:508.00px;top:353.0px;transform:scaleX(0.8873)">BDEAFBA9</div>
<svg class="abs" style="left:8px;top:370px" width="13" height="16" viewBox="0 0 13 16"><path d="M0.5 1.2L1.6 0.5L2.7 1.5L3.8 0.5L4.9 1.5L6 0.5L7.1 1.5L8.2 0.5L9.3 0.9L12.5 4.1V15.5H0.5Z" fill="#fff" stroke="#848484" stroke-width="1" stroke-linejoin="round"/><path d="M9.3 0.9V4.1H12.5" fill="#f0f0f0" stroke="#9a9a9a" stroke-width=".8"/><path d="M1 5.5H12M1 7.5H12M1 9.5H12M1 11.5H12M1 13.5H12" stroke="#c0cede" stroke-width="1"/><path d="M0.5 15.5H12.5" stroke="#606060" stroke-width="1"/></svg>
<div class="t" style="left:23.60px;top:372.0px;transform:scaleX(0.9591)">6.c</div>
<div class="t" style="left:177.70px;top:372.0px;transform:scaleX(0.8697)">562</div>
<div class="t" style="left:258.00px;top:372.0px;transform:scaleX(0.8797)">337</div>
<div class="t" style="left:288.10px;top:372.0px;transform:scaleX(0.9887)">Файл "C"</div>
<div class="t" style="left:408.00px;top:372.0px;transform:scaleX(0.8889)">16.08.2024 2:12</div>
<div class="t" style="left:508.00px;top:372.0px;transform:scaleX(0.8873)">5A2C0A7F</div>
<svg class="abs" style="left:8px;top:389px" width="13" height="16" viewBox="0 0 13 16"><path d="M0.5 1.2L1.6 0.5L2.7 1.5L3.8 0.5L4.9 1.5L6 0.5L7.1 1.5L8.2 0.5L9.3 0.9L12.5 4.1V15.5H0.5Z" fill="#fff" stroke="#848484" stroke-width="1" stroke-linejoin="round"/><path d="M9.3 0.9V4.1H12.5" fill="#f0f0f0" stroke="#9a9a9a" stroke-width=".8"/><path d="M1 5.5H12M1 7.5H12M1 9.5H12M1 11.5H12M1 13.5H12" stroke="#c0cede" stroke-width="1"/><path d="M0.5 15.5H12.5" stroke="#606060" stroke-width="1"/></svg>
<div class="t" style="left:23.60px;top:391.0px;transform:scaleX(0.9591)">24.c</div>
<div class="t" style="left:177.70px;top:391.0px;transform:scaleX(0.8697)">512</div>
<div class="t" style="left:258.00px;top:391.0px;transform:scaleX(0.8797)">296</div>
<div class="t" style="left:288.10px;top:391.0px;transform:scaleX(0.9887)">Файл "C"</div>
<div class="t" style="left:408.00px;top:391.0px;transform:scaleX(0.8889)">16.08.2024 2:12</div>
<div class="t" style="left:508.00px;top:391.0px;transform:scaleX(0.8873)">E04F842A</div>
<svg class="abs" style="left:8px;top:408px" width="13" height="16" viewBox="0 0 13 16"><path d="M0.5 1.2L1.6 0.5L2.7 1.5L3.8 0.5L4.9 1.5L6 0.5L7.1 1.5L8.2 0.5L9.3 0.9L12.5 4.1V15.5H0.5Z" fill="#fff" stroke="#848484" stroke-width="1" stroke-linejoin="round"/><path d="M9.3 0.9V4.1H12.5" fill="#f0f0f0" stroke="#9a9a9a" stroke-width=".8"/><path d="M1 5.5H12M1 7.5H12M1 9.5H12M1 11.5H12M1 13.5H12" stroke="#c0cede" stroke-width="1"/><path d="M0.5 15.5H12.5" stroke="#606060" stroke-width="1"/></svg>
<div class="t" style="left:23.60px;top:410.0px;transform:scaleX(0.9591)">3.c</div>
<div class="t" style="left:177.70px;top:410.0px;transform:scaleX(0.8697)">461</div>
<div class="t" style="left:258.00px;top:410.0px;transform:scaleX(0.8797)">282</div>
<div class="t" style="left:288.10px;top:410.0px;transform:scaleX(0.9887)">Файл "C"</div>
<div class="t" style="left:408.00px;top:410.0px;transform:scaleX(0.8889)">16.08.2024 2:12</div>
<div class="t" style="left:508.00px;top:410.0px;transform:scaleX(0.8873)">09530C4C</div>
<svg class="abs" style="left:8px;top:427px" width="13" height="16" viewBox="0 0 13 16"><path d="M0.5 1.2L1.6 0.5L2.7 1.5L3.8 0.5L4.9 1.5L6 0.5L7.1 1.5L8.2 0.5L9.3 0.9L12.5 4.1V15.5H0.5Z" fill="#fff" stroke="#848484" stroke-width="1" stroke-linejoin="round"/><path d="M9.3 0.9V4.1H12.5" fill="#f0f0f0" stroke="#9a9a9a" stroke-width=".8"/><path d="M1 5.5H12M1 7.5H12M1 9.5H12M1 11.5H12M1 13.5H12" stroke="#c0cede" stroke-width="1"/><path d="M0.5 15.5H12.5" stroke="#606060" stroke-width="1"/></svg>
<div class="t" style="left:23.60px;top:429.0px;transform:scaleX(0.9591)">14.c</div>
<div class="t" style="left:177.70px;top:429.0px;transform:scaleX(0.8697)">437</div>
<div class="t" style="left:258.00px;top:429.0px;transform:scaleX(0.8797)">265</div>
<div class="t" style="left:288.10px;top:429.0px;transform:scaleX(0.9887)">Файл "C"</div>
<div class="t" style="left:408.00px;top:429.0px;transform:scaleX(0.8889)">16.08.2024 2:12</div>
<div class="t" style="left:508.00px;top:429.0px;transform:scaleX(0.8873)">EE26F419</div>
<svg class="abs" style="left:8px;top:446px" width="13" height="16" viewBox="0 0 13 16"><path d="M0.5 1.2L1.6 0.5L2.7 1.5L3.8 0.5L4.9 1.5L6 0.5L7.1 1.5L8.2 0.5L9.3 0.9L12.5 4.1V15.5H0.5Z" fill="#fff" stroke="#848484" stroke-width="1" stroke-linejoin="round"/><path d="M9.3 0.9V4.1H12.5" fill="#f0f0f0" stroke="#9a9a9a" stroke-width=".8"/><path d="M1 5.5H12M1 7.5H12M1 9.5H12M1 11.5H12M1 13.5H12" stroke="#c0cede" stroke-width="1"/><path d="M0.5 15.5H12.5" stroke="#606060" stroke-width="1"/></svg>
<div class="t" style="left:23.60px;top:448.0px;transform:scaleX(0.9591)">9.c</div>
<div class="t" style="left:177.70px;top:448.0px;transform:scaleX(0.8697)">430</div>
<div class="t" style="left:258.00px;top:448.0px;transform:scaleX(0.8797)">275</div>
<div class="t" style="left:288.10px;top:448.0px;transform:scaleX(0.9887)">Файл "C"</div>
<div class="t" style="left:408.00px;top:448.0px;transform:scaleX(0.8889)">16.08.2024 2:12</div>
<div class="t" style="left:508.00px;top:448.0px;transform:scaleX(0.8873)">AC2CB651</div>
<svg class="abs" style="left:8px;top:465px" width="13" height="16" viewBox="0 0 13 16"><path d="M0.5 1.2L1.6 0.5L2.7 1.5L3.8 0.5L4.9 1.5L6 0.5L7.1 1.5L8.2 0.5L9.3 0.9L12.5 4.1V15.5H0.5Z" fill="#fff" stroke="#848484" stroke-width="1" stroke-linejoin="round"/><path d="M9.3 0.9V4.1H12.5" fill="#f0f0f0" stroke="#9a9a9a" stroke-width=".8"/><path d="M1 5.5H12M1 7.5H12M1 9.5H12M1 11.5H12M1 13.5H12" stroke="#c0cede" stroke-width="1"/><path d="M0.5 15.5H12.5" stroke="#606060" stroke-width="1"/></svg>
<div class="t" style="left:23.60px;top:467.0px;transform:scaleX(0.9591)">12.c</div>
<div class="t" style="left:177.70px;top:467.0px;transform:scaleX(0.8697)">429</div>
<div class="t" style="left:258.00px;top:467.0px;transform:scaleX(0.8797)">264</div>
<div class="t" style="left:288.10px;top:467.0px;transform:scaleX(0.9887)">Файл "C"</div>
<div class="t" style="left:408.00px;top:467.0px;transform:scaleX(0.8889)">16.08.2024 2:12</div>
<div class="t" style="left:508.00px;top:467.0px;transform:scaleX(0.8873)">695FA107</div>
<svg class="abs" style="left:8px;top:484px" width="13" height="16" viewBox="0 0 13 16"><path d="M0.5 1.2L1.6 0.5L2.7 1.5L3.8 0.5L4.9 1.5L6 0.5L7.1 1.5L8.2 0.5L9.3 0.9L12.5 4.1V15.5H0.5Z" fill="#fff" stroke="#848484" stroke-width="1" stroke-linejoin="round"/><path d="M9.3 0.9V4.1H12.5" fill="#f0f0f0" stroke="#9a9a9a" stroke-width=".8"/><path d="M1 5.5H12M1 7.5H12M1 9.5H12M1 11.5H12M1 13.5H12" stroke="#c0cede" stroke-width="1"/><path d="M0.5 15.5H12.5" stroke="#606060" stroke-width="1"/></svg>
<div class="t" style="left:23.60px;top:486.0px;transform:scaleX(0.9591)">1.c</div>
<div class="t" style="left:177.70px;top:486.0px;transform:scaleX(0.8697)">400</div>
<div class="t" style="left:258.00px;top:486.0px;transform:scaleX(0.8797)">228</div>
<div class="t" style="left:288.10px;top:486.0px;transform:scaleX(0.9887)">Файл "C"</div>
<div class="t" style="left:408.00px;top:486.0px;transform:scaleX(0.8889)">16.08.2024 2:12</div>
<div class="t" style="left:508.00px;top:486.0px;transform:scaleX(0.8873)">780C3030</div>
<svg class="abs" style="left:8px;top:503px" width="13" height="16" viewBox="0 0 13 16"><path d="M0.5 1.2L1.6 0.5L2.7 1.5L3.8 0.5L4.9 1.5L6 0.5L7.1 1.5L8.2 0.5L9.3 0.9L12.5 4.1V15.5H0.5Z" fill="#fff" stroke="#848484" stroke-width="1" stroke-linejoin="round"/><path d="M9.3 0.9V4.1H12.5" fill="#f0f0f0" stroke="#9a9a9a" stroke-width=".8"/><path d="M1 5.5H12M1 7.5H12M1 9.5H12M1 11.5H12M1 13.5H12" stroke="#c0cede" stroke-width="1"/><path d="M0.5 15.5H12.5" stroke="#606060" stroke-width="1"/></svg>
<div class="t" style="left:23.60px;top:505.0px;transform:scaleX(0.9591)">8.c</div>
<div class="t" style="left:177.70px;top:505.0px;transform:scaleX(0.8697)">378</div>
<div class="t" style="left:258.00px;top:505.0px;transform:scaleX(0.8797)">239</div>
<div class="t" style="left:288.10px;top:505.0px;transform:scaleX(0.9887)">Файл "C"</div>
<div class="t" style="left:408.00px;top:505.0px;transform:scaleX(0.8889)">16.08.2024 2:12</div>
<div class="t" style="left:508.00px;top:505.0px;transform:scaleX(0.8873)">D7A0F3C0</div>
<svg class="abs" style="left:8px;top:522px" width="13" height="16" viewBox="0 0 13 16"><path d="M0.5 1.2L1.6 0.5L2.7 1.5L3.8 0.5L4.9 1.5L6 0.5L7.1 1.5L8.2 0.5L9.3 0.9L12.5 4.1V15.5H0.5Z" fill="#fff" stroke="#848484" stroke-width="1" stroke-linejoin="round"/><path d="M9.3 0.9V4.1H12.5" fill="#f0f0f0" stroke="#9a9a9a" stroke-width=".8"/><path d="M1 5.5H12M1 7.5H12M1 9.5H12M1 11.5H12M1 13.5H12" stroke="#c0cede" stroke-width="1"/><path d="M0.5 15.5H12.5" stroke="#606060" stroke-width="1"/></svg>
<div class="t" style="left:23.60px;top:524.0px;transform:scaleX(0.9591)">7.c</div>
<div class="t" style="left:177.70px;top:524.0px;transform:scaleX(0.8697)">376</div>
<div class="t" style="left:258.00px;top:524.0px;transform:scaleX(0.8797)">239</div>
<div class="t" style="left:288.10px;top:524.0px;transform:scaleX(0.9887)">Файл "C"</div>
<div class="t" style="left:408.00px;top:524.0px;transform:scaleX(0.8889)">16.08.2024 2:12</div>
<div class="t" style="left:508.00px;top:524.0px;transform:scaleX(0.8873)">919A5CD3</div>
<svg class="abs" style="left:8px;top:541px" width="13" height="16" viewBox="0 0 13 16"><path d="M0.5 1.2L1.6 0.5L2.7 1.5L3.8 0.5L4.9 1.5L6 0.5L7.1 1.5L8.2 0.5L9.3 0.9L12.5 4.1V15.5H0.5Z" fill="#fff" stroke="#848484" stroke-width="1" stroke-linejoin="round"/><path d="M9.3 0.9V4.1H12.5" fill="#f0f0f0" stroke="#9a9a9a" stroke-width=".8"/><path d="M1 5.5H12M1 7.5H12M1 9.5H12M1 11.5H12M1 13.5H12" stroke="#c0cede" stroke-width="1"/><path d="M0.5 15.5H12.5" stroke="#606060" stroke-width="1"/></svg>
<div class="t" style="left:23.60px;top:543.0px;transform:scaleX(0.9591)">13.c</div>
<div class="t" style="left:177.70px;top:543.0px;transform:scaleX(0.8697)">354</div>
<div class="t" style="left:258.00px;top:543.0px;transform:scaleX(0.8797)">243</div>
<div class="t" style="left:288.10px;top:543.0px;transform:scaleX(0.9887)">Файл "C"</div>
<div class="t" style="left:408.00px;top:543.0px;transform:scaleX(0.8889)">16.08.2024 2:12</div>
<div class="t" style="left:508.00px;top:543.0px;transform:scaleX(0.8873)">C03E704F</div>
<svg class="abs" style="left:8px;top:560px" width="13" height="16" viewBox="0 0 13 16"><path d="M0.5 1.2L1.6 0.5L2.7 1.5L3.8 0.5L4.9 1.5L6 0.5L7.1 1.5L8.2 0.5L9.3 0.9L12.5 4.1V15.5H0.5Z" fill="#fff" stroke="#848484" stroke-width="1" stroke-linejoin="round"/><path d="M9.3 0.9V4.1H12.5" fill="#f0f0f0" stroke="#9a9a9a" stroke-width=".8"/><path d="M1 5.5H12M1 7.5H12M1 9.5H12M1 11.5H12M1 13.5H12" stroke="#c0cede" stroke-width="1"/><path d="M0.5 15.5H12.5" stroke="#606060" stroke-width="1"/></svg>
<div class="t" style="left:23.60px;top:562.0px;transform:scaleX(0.9591)">15.c</div>
<div class="t" style="left:177.70px;top:562.0px;transform:scaleX(0.8697)">350</div>
<div class="t" style="left:258.00px;top:562.0px;transform:scaleX(0.8797)">250</div>
<div class="t" style="left:288.10px;top:562.0px;transform:scaleX(0.9887)">Файл "C"</div>
<div class="t" style="left:408.00px;top:562.0px;transform:scaleX(0.8889)">16.08.2024 2:12</div>
<div class="t" style="left:508.00px;top:562.0px;transform:scaleX(0.8873)">7A810859</div>
<svg class="abs" style="left:8px;top:579px" width="13" height="16" viewBox="0 0 13 16"><path d="M0.5 1.2L1.6 0.5L2.7 1.5L3.8 0.5L4.9 1.5L6 0.5L7.1 1.5L8.2 0.5L9.3 0.9L12.5 4.1V15.5H0.5Z" fill="#fff" stroke="#848484" stroke-width="1" stroke-linejoin="round"/><path d="M9.3 0.9V4.1H12.5" fill="#f0f0f0" stroke="#9a9a9a" stroke-width=".8"/><path d="M1 5.5H12M1 7.5H12M1 9.5H12M1 11.5H12M1 13.5H12" stroke="#c0cede" stroke-width="1"/><path d="M0.5 15.5H12.5" stroke="#606060" stroke-width="1"/></svg>
<div class="t" style="left:23.60px;top:581.0px;transform:scaleX(0.9591)">10.c</div>
<div class="t" style="left:177.70px;top:581.0px;transform:scaleX(0.8697)">323</div>
<div class="t" style="left:258.00px;top:581.0px;transform:scaleX(0.8797)">220</div>
<div class="t" style="left:288.10px;top:581.0px;transform:scaleX(0.9887)">Файл "C"</div>
<div class="t" style="left:408.00px;top:581.0px;transform:scaleX(0.8889)">16.08.2024 2:12</div>
<div class="t" style="left:508.00px;top:581.0px;transform:scaleX(0.8873)">99E9D4EA</div>
<svg class="abs" style="left:8px;top:598px" width="13" height="16" viewBox="0 0 13 16"><path d="M0.5 1.2L1.6 0.5L2.7 1.5L3.8 0.5L4.9 1.5L6 0.5L7.1 1.5L8.2 0.5L9.3 0.9L12.5 4.1V15.5H0.5Z" fill="#fff" stroke="#848484" stroke-width="1" stroke-linejoin="round"/><path d="M9.3 0.9V4.1H12.5" fill="#f0f0f0" stroke="#9a9a9a" stroke-width=".8"/><path d="M1 5.5H12M1 7.5H12M1 9.5H12M1 11.5H12M1 13.5H12" stroke="#c0cede" stroke-width="1"/><path d="M0.5 15.5H12.5" stroke="#606060" stroke-width="1"/></svg>
<div class="t" style="left:23.60px;top:600.0px;transform:scaleX(0.9591)">2.c</div>
<div class="t" style="left:177.70px;top:600.0px;transform:scaleX(0.8697)">318</div>
<div class="t" style="left:258.00px;top:600.0px;transform:scaleX(0.8797)">229</div>
<div class="t" style="left:288.10px;top:600.0px;transform:scaleX(0.9887)">Файл "C"</div>
<div class="t" style="left:408.00px;top:600.0px;transform:scaleX(0.8889)">16.08.2024 2:12</div>
<div class="t" style="left:508.00px;top:600.0px;transform:scaleX(0.8873)">87B6D106</div>
<svg class="abs" style="left:8px;top:617px" width="13" height="16" viewBox="0 0 13 16"><path d="M0.5 1.2L1.6 0.5L2.7 1.5L3.8 0.5L4.9 1.5L6 0.5L7.1 1.5L8.2 0.5L9.3 0.9L12.5 4.1V15.5H0.5Z" fill="#fff" stroke="#848484" stroke-width="1" stroke-linejoin="round"/><path d="M9.3 0.9V4.1H12.5" fill="#f0f0f0" stroke="#9a9a9a" stroke-width=".8"/><path d="M1 5.5H12M1 7.5H12M1 9.5H12M1 11.5H12M1 13.5H12" stroke="#c0cede" stroke-width="1"/><path d="M0.5 15.5H12.5" stroke="#606060" stroke-width="1"/></svg>
<div class="t" style="left:23.60px;top:619.0px;transform:scaleX(0.9591)">4.c</div>
<div class="t" style="left:177.70px;top:619.0px;transform:scaleX(0.8697)">304</div>
<div class="t" style="left:258.00px;top:619.0px;transform:scaleX(0.8797)">216</div>
<div class="t" style="left:288.10px;top:619.0px;transform:scaleX(0.9887)">Файл "C"</div>
<div class="t" style="left:408.00px;top:619.0px;transform:scaleX(0.8889)">16.08.2024 2:12</div>
<div class="t" style="left:508.00px;top:619.0px;transform:scaleX(0.8873)">F5ED6E5B</div>
<svg class="abs" style="left:8px;top:636px" width="13" height="16" viewBox="0 0 13 16"><path d="M0.5 1.2L1.6 0.5L2.7 1.5L3.8 0.5L4.9 1.5L6 0.5L7.1 1.5L8.2 0.5L9.3 0.9L12.5 4.1V15.5H0.5Z" fill="#fff" stroke="#848484" stroke-width="1" stroke-linejoin="round"/><path d="M9.3 0.9V4.1H12.5" fill="#f0f0f0" stroke="#9a9a9a" stroke-width=".8"/><path d="M1 5.5H12M1 7.5H12M1 9.5H12M1 11.5H12M1 13.5H12" stroke="#c0cede" stroke-width="1"/><path d="M0.5 15.5H12.5" stroke="#606060" stroke-width="1"/></svg>
<div class="t" style="left:23.60px;top:638.0px;transform:scaleX(0.9591)">5.c</div>
<div class="t" style="left:177.70px;top:638.0px;transform:scaleX(0.8697)">285</div>
<div class="t" style="left:258.00px;top:638.0px;transform:scaleX(0.8797)">214</div>
<div class="t" style="left:288.10px;top:638.0px;transform:scaleX(0.9887)">Файл "C"</div>
<div class="t" style="left:408.00px;top:638.0px;transform:scaleX(0.8889)">16.08.2024 2:12</div>
<div class="t" style="left:508.00px;top:638.0px;transform:scaleX(0.8873)">3461D6AC</div>
<!-- STATUS -->
<div id="st" class="abs"></div><div id="stl1" class="abs"></div><div id="stl2" class="abs"></div>
<div class="t" style="left:708.70px;top:711.0px;transform:scaleX(0.9381)">Всего: 25 файл(а,ов), 21 380 байт</div>
<!-- title icon -->
<svg class="abs" style="left:0;top:3px" width="16" height="15" viewBox="0 3 16 15">
<rect x="0" y="3" width="16" height="4.8" fill="#c0205c"/><rect x="0" y="3" width="16" height="1" fill="#d84078"/>
<rect x="0" y="7.9" width="16" height="4.8" fill="#5448b0"/><rect x="0" y="7.9" width="16" height="1" fill="#6c60c8"/>
<rect x="0" y="12.8" width="16" height="5" fill="#1c8444"/><rect x="0" y="12.8" width="16" height="1" fill="#30a058"/>
<rect x="0" y="7.5" width="16" height=".7" fill="#40102c" opacity=".55"/><rect x="0" y="12.4" width="16" height=".7" fill="#10203c" opacity=".55"/><rect x="5.8" y="3" width="4.5" height="14.8" fill="#e8701c"/><rect x="5.8" y="3" width="1" height="14.8" fill="#f08838"/>
<rect x="5.2" y="8.4" width="5.6" height="4.4" fill="#fff"/><rect x="6.6" y="9.6" width="1" height="3.2" fill="#d82010"/><rect x="8.6" y="9.6" width="1" height="3.2" fill="#d82010"/>
<rect x="1" y="4.2" width="1" height="2.4" fill="#f8d820"/><rect x="1" y="9" width="1" height="2.4" fill="#f8d820"/><rect x="1" y="14" width="1" height="2.6" fill="#f8d820"/>
</svg>
<!-- toolbar grip -->
<div class="abs" style="left:3px;top:42px;width:2px;height:90px;background:repeating-linear-gradient(#ffffff 0,#ffffff 2px,rgba(255,255,255,0) 2px,rgba(255,255,255,0) 4px);"></div>
<div class="abs" style="left:4px;top:43px;width:2px;height:89px;background:repeating-linear-gradient(#c0c4d0 0,#989cae 2px,rgba(255,255,255,0) 2px,rgba(255,255,255,0) 4px);"></div>
<div class="abs" style="left:0;top:41px;width:1px;height:91px;background:rgba(255,255,255,.45)"></div>
<!-- up arrow -->
<svg class="abs" style="left:15px;top:111px" width="14" height="15" viewBox="15 111 14 15"><path d="M22 124V114.4M17.6 118.4L22 113.9L26.4 118.4" fill="none" stroke="#8c8c8c" stroke-width="1.5"/></svg>
<!-- sort arrow -->
<svg class="abs" style="left:158px;top:136px" width="10" height="6" viewBox="158 136 10 6"><path d="M159 137H167L163 141Z" fill="#8cb0cc"/><path d="M159 137.2H167" stroke="#6c94b8" stroke-width=".6"/></svg>
<!-- parent folder icon -->
<svg class="abs" style="left:7px;top:161px" width="14" height="16" viewBox="7 161 14 16">
<defs><linearGradient id="gFold" x1="0" x2="1" y1="0" y2="0"><stop offset="0" stop-color="#8ab8cc"/><stop offset=".25" stop-color="#a4d0e0"/><stop offset=".45" stop-color="#80b0c4"/><stop offset=".6" stop-color="#98c8d8"/><stop offset="1" stop-color="#84b0bc"/></linearGradient></defs>
<path d="M7.2 163Q7.2 161.3 9 161.3H17Q18.8 161.3 18.8 163V175Q18.8 176.6 17 176.6H9Q7.2 176.6 7.2 175Z" fill="url(#gFold)"/>
<path d="M12.6 162V176" stroke="#6c9cb0" stroke-width=".8"/><path d="M10.4 162.4L11.6 164V174" stroke="#90b4f0" stroke-width=".8" fill="none"/>
<rect x="17.9" y="168.2" width="1.5" height="5.6" fill="#3c98f8"/><rect x="18.8" y="167" width="1.2" height="1.4" fill="#b8e020"/>
</svg>
<!-- status icons -->
<svg class="abs" style="left:3px;top:710px" width="38" height="12" viewBox="3 710 38 12">
<rect x="4.6" y="712.4" width="14.8" height="7.2" rx="2" fill="#d8e8f4" stroke="#88a8c0" stroke-width=".9"/>
<rect x="6.2" y="714" width="11.6" height="4" fill="#3c444c"/><rect x="6.8" y="714.6" width="1.2" height="1.2" fill="#e0e8f0"/>
<path d="M23.2 714.4Q23.2 713.4 24.4 713.4H31V716.6H29.8L29.2 717.8H27.8L27.2 716.8H25.8L25.2 717.8H24L23.2 716.8Z" fill="#5c6c7c"/>
<path d="M23.4 714.5Q23.4 713.6 24.4 713.6H31V715.4H23.4Z" fill="#e8eef4"/>
<circle cx="34" cy="716.4" r="4.9" fill="#2c343c"/>
<circle cx="34" cy="715.6" r="4.6" fill="#fcfcfc"/>
<circle cx="34" cy="715.6" r="4.8" fill="none" stroke="#7c8894" stroke-width=".5"/>
<circle cx="34.1" cy="715.8" r="1.9" fill="#c4c8cc" stroke="#848c94" stroke-width=".8"/>
<circle cx="34.3" cy="716" r=".8" fill="#eceef0"/>
</svg>
<div class="abs" style="left:0;top:706px;width:1px;height:21px;background:#fbfbfb"></div>
<div class="abs" style="left:41px;top:707px;width:1px;height:20px;background:#cacaca"></div><div class="abs" style="left:42px;top:707px;width:1px;height:20px;background:#fafafa"></div>
<div class="abs" style="left:703px;top:707px;width:1px;height:20px;background:#c4c4c4"></div><div class="abs" style="left:704px;top:707px;width:1px;height:20px;background:#fafafa"></div>

</body>
</html>
